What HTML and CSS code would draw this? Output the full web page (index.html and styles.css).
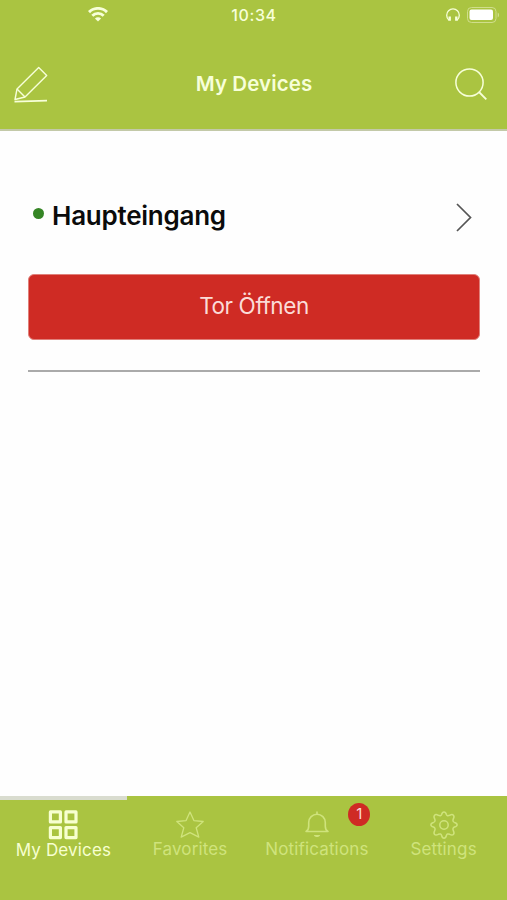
FILE: index.html
```html
<!DOCTYPE html>
<html lang="en">
<head>
  <meta charset="UTF-8">
  <meta name="viewport" content="width=device-width, initial-scale=1">
  <title>My Devices</title>
  <link rel="stylesheet" href="styles.css">
</head>
<body>

  <header class="header">
    <div class="status-bar">
      <svg class="wifi" width="20" height="15" viewBox="0 0 20 15" fill="none" stroke="currentColor" stroke-width="2.9">
        <path d="M1 5.1a12.8 12.8 0 0 1 18 0"/>
        <path d="M4.3 8.7a8.1 8.1 0 0 1 11.4 0"/>
        <path d="M10 14.6 6.9 11.5a4.4 4.4 0 0 1 6.2 0z" fill="currentColor" stroke="none"/>
      </svg>
      <span class="clock">10:34</span>
      <div class="status-right">
        <svg width="14" height="14" viewBox="0 0 14 14" fill="none" stroke="currentColor" stroke-width="1.3">
          <path d="M3 12.2C1.5 11 .7 9.3.7 7.2a6.3 6.3 0 0 1 12.6 0C13.3 9.3 12.500 11 11 12.200"/>
          <path d="M3.700 8.500v4.300M10.300 8.500v4.300" stroke-width="2.400"/>
        </svg>
        <svg width="33" height="16" viewBox="0 0 33 16" fill="none">
          <rect x=".5" y=".5" width="28.500" height="15" rx="4" stroke="#d0de8c"/>
          <rect x="2.500" y="2.500" width="23.500" height="10.500" rx="2" fill="#fff"/>
          <path d="M30.700 5.500c1.800.8 1.800 4.200 0 5z" fill="#d0de8c"/>
        </svg>
      </div>
    </div>
    <div class="nav-bar">
      <svg class="edit" width="34" height="38" viewBox="0 0 34 38" fill="none" stroke="currentColor" stroke-width="1.400" stroke-linejoin="round">
        <path d="M1 33.500 3 23 24.700 1.500l8 8L11 31z"/>
        <path d="M3 23l8 8"/>
        <path d="M.5 35.700 33 34.700" stroke-width="1.800"/>
      </svg>
      <h1 class="title">My Devices</h1>
      <svg width="32" height="32" viewBox="0 0 32 32" fill="none" stroke="currentColor" stroke-width="1.500">
        <circle cx="14.500" cy="14.500" r="13.600"/>
        <path d="M24 24l7.300 7.300" stroke-width="1.800"/>
      </svg>
    </div>
  </header>

  <main class="content">
    <section class="device">
      <div class="device-head">
        <span class="status-dot"></span>
        <h2 class="device-name">Haupteingang</h2>
        <svg class="chevron" width="16" height="29" viewBox="0 0 16 29" fill="none" stroke="#555" stroke-width="1.700">
          <path d="M1 1 14.500 14.500 1 28"/>
        </svg>
      </div>
      <button class="btn-open" type="button">Tor Öffnen</button>
    </section>
  </main>

  <nav class="tab-bar">
    <a class="tab active">
      <svg width="30" height="30" viewBox="0 0 30 30" fill="none" stroke="currentColor" stroke-width="3.200" stroke-linejoin="round">
        <rect x="2.400" y="1.900" width="10" height="10"/>
        <rect x="18" y="1.900" width="10" height="10"/>
        <rect x="2.400" y="17.600" width="10" height="10"/>
        <rect x="18" y="17.600" width="10" height="10"/>
      </svg>
      <span class="tab-label">My Devices</span>
    </a>
    <a class="tab">
      <svg width="30" height="30" viewBox="0 0 30 30" fill="none" stroke="currentColor" stroke-width="1.300" stroke-linejoin="round">
        <path d="M15 2l3.900 8.600 9.300.9-7 6.300 2.600 9.300L15 22.700 6.200 27.100 8.800 17.800 1.800 11.500l9.300-.9z"/>
      </svg>
      <span class="tab-label">Favorites</span>
    </a>
    <a class="tab">
      <svg width="30" height="30" viewBox="0 0 30 30" fill="none" stroke="currentColor" stroke-width="1.600" stroke-linejoin="round">
        <path d="M15 1.500v2.700"/>
        <path d="M4 21.500h22c-2-1-2.700-2.500-2.700-5.300v-3.700a8.300 8.300 0 0 0-16.600 0v3.700c0 2.800-.7 4.300-2.700 5.300z"/>
        <path d="M11.800 25c1 2.800 5.400 2.800 6.400 0z" fill="currentColor" stroke="none"/>
      </svg>
      <span class="tab-label">Notifications</span>
      <span class="badge">1</span>
    </a>
    <a class="tab">
      <svg width="30" height="30" viewBox="0 0 30 30" fill="none" stroke="currentColor" stroke-width="1.500" stroke-linejoin="round">
        <path d="M12.600 4.500C13.500 1 16.500 1 17.400 4.500Q18 6.400 20.700 5.300C24 3.500 26.100 5.600 24.300 8.900Q23.200 11.600 25.500 12.400C29 13.300 29 16.100 25.500 17Q23.200 17.900 24.300 20.700C26.100 24 24 26.100 20.700 24.300Q18 23.200 17.400 25.500C16.500 29 13.500 29 12.600 25.500Q12 23.200 9.300 24.300C6 26.100 3.900 24 5.700 20.700Q6.800 17.900 4.500 17C1 16.100 1 13.300 4.500 12.400Q6.800 11.600 5.700 8.900C3.900 5.600 6 3.500 9.300 5.300Q12 6.400 12.600 4.500z"/>
        <circle cx="15" cy="15" r="4.200"/>
      </svg>
      <span class="tab-label">Settings</span>
    </a>
  </nav>

</body>
</html>
```
FILE: styles.css
```css
* {
  box-sizing: border-box;
}

body {
  margin: 0;
  height: 900px;
  display: flex;
  flex-direction: column;
  font-family: Inter, "Liberation Sans", sans-serif;
  background-color: #fefefe;
  color: #0b0b0b;
}

svg {
  display: block;
}

/* header */
.header {
  height: 131px;
  background-color: #aac441;
  border-bottom: 2px solid #c3c9a8;
  color: #f7ffd9;
}

.status-bar {
  height: 29px;
  padding: 0 7px 0 88px;
  display: grid;
  grid-template-columns: 1fr auto 1fr;
  align-items: center;
}

.status-bar .wifi {
  margin-top: -1px;
}

.clock {
  font-size: 16px;
  font-weight: 500;
  letter-spacing: 0.6px;
  margin-right: 80px;
}

.status-right {
  display: flex;
  align-items: center;
  justify-content: flex-end;
  gap: 7px;
}

.nav-bar {
  height: 110px;
  padding: 0 20px 0 14px;
  display: flex;
  align-items: center;
  justify-content: space-between;
}

.nav-bar .edit {
  margin-top: 2px;
}

.title {
  margin: 0;
  padding: 0 0 2px 5px;
  font-size: 20.5px;
  font-weight: 600;
  letter-spacing: 0.1px;
}

/* device list */
.content {
  flex: 1;
  padding: 55px 27px 0 28px;
}

.device {
  border-bottom: 2px solid #aaa;
  padding-bottom: 30px;
}

.device-head {
  height: 62px;
  padding: 0 8px 0 5px;
  display: flex;
  align-items: center;
}

.status-dot {
  width: 11px;
  height: 11px;
  margin: -8px 8px 0 0;
  border-radius: 50%;
  background-color: #358525;
}

.device-name {
  margin: 0;
  padding-bottom: 3px;
  font-size: 26px;
  font-weight: 600;
  letter-spacing: -0.25px;
}

.chevron {
  margin-left: auto;
}

.btn-open {
  display: block;
  width: 100%;
  height: 66px;
  margin-top: 26px;
  padding: 0 0 3px;
  border: 1px solid #e0807a;
  border-radius: 6px;
  background-color: #cf2b24;
  color: #fbdcd8;
  font-family: inherit;
  font-size: 22.5px;
  letter-spacing: -0.4px;
}

/* bottom tabs */
.tab-bar {
  height: 104px;
  display: grid;
  grid-template-columns: repeat(4, 1fr);
  background-color: #aac441;
}

.tab {
  position: relative;
  padding-top: 14px;
  display: flex;
  flex-direction: column;
  align-items: center;
  color: #cfe37c;
}

.tab.active {
  border-top: 4px solid #d9dccf;
  padding-top: 10px;
  color: #f7ffd0;
}

.tab-label {
  font-size: 17px;
  line-height: 19px;
  letter-spacing: 0.15px;
}

.active .tab-label {
  line-height: 21px;
}

.badge {
  position: absolute;
  top: 7px;
  right: 10px;
  width: 22px;
  height: 23px;
  border-radius: 50%;
  background-color: #cf2b24;
  color: #fbdcd8;
  font-size: 15px;
  line-height: 22px;
  text-align: center;
}
```
